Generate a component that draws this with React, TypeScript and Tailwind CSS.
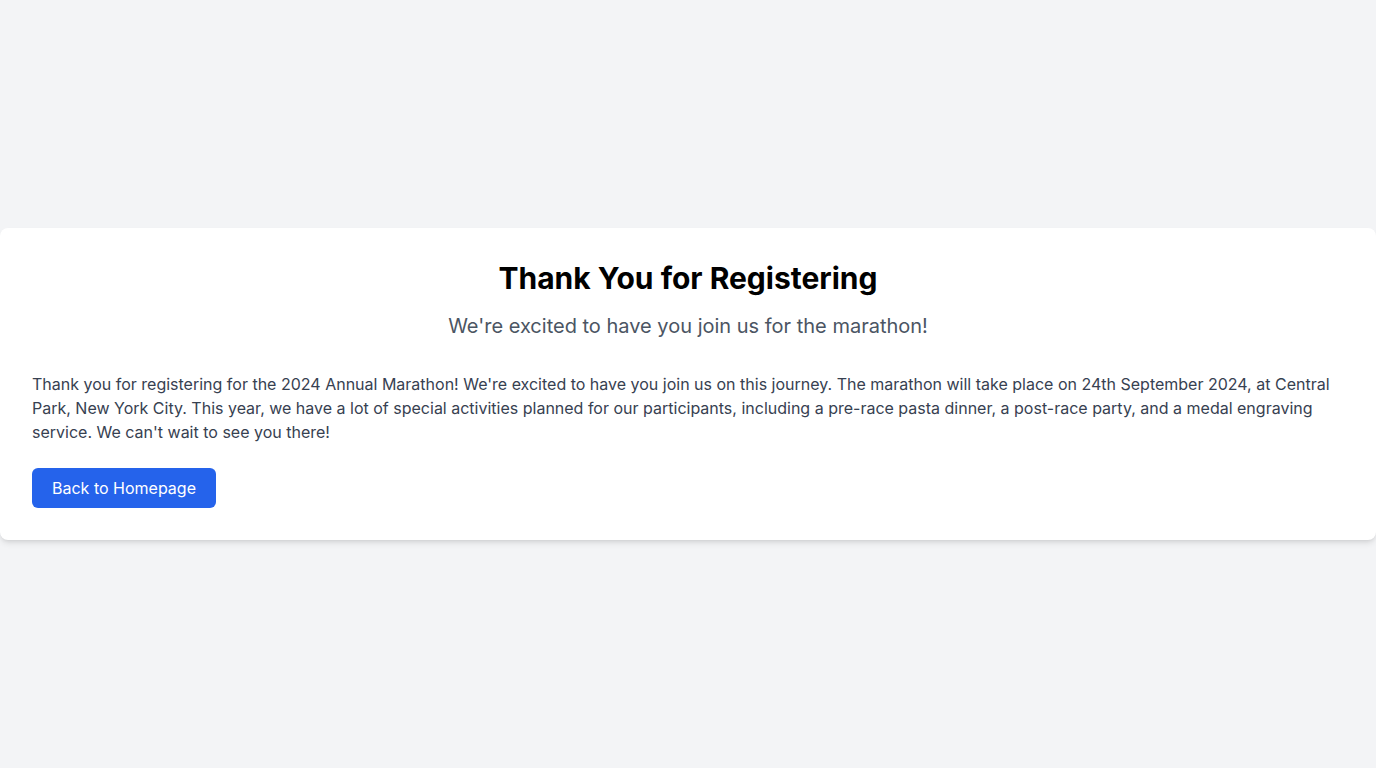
export default function App() {
  return (
    <div
      className="min-h-screen bg-[#f3f4f6] flex items-center justify-center"
      style={{ fontFamily: "Inter, 'Noto Sans', sans-serif" }}
    >
      <div className="w-full bg-white rounded-lg shadow-md p-8">
        <h1 className="text-3xl font-bold text-center text-black">Thank You for Registering</h1>
        <p className="mt-4 text-xl text-center text-[#4b5563]">
          We're excited to have you join us for the marathon!
        </p>
        <p className="mt-8 text-base text-[#374151]">
          Thank you for registering for the 2024 Annual Marathon! We're excited to have you join us on this
          journey. The marathon will take place on 24th September 2024, at Central Park, New York City. This
          year, we have a lot of special activities planned for our participants, including a pre-race pasta
          dinner, a post-race party, and a medal engraving service. We can't wait to see you there!
        </p>
        <button className="mt-6 px-5 py-2 bg-[#2563eb] text-white rounded-md text-base">
          Back to Homepage
        </button>
      </div>
    </div>
  );
}
